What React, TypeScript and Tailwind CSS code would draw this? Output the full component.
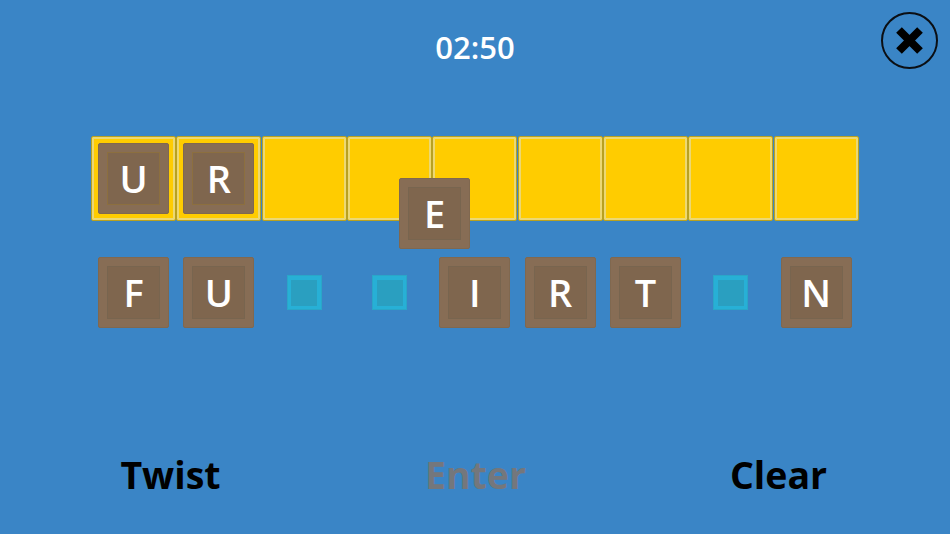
const slots = ["U", "R", "", "", "", "", "", "", ""];
const rack = ["F", "U", "", "", "I", "R", "T", "", "N"];

function Tile({ letter, onYellow }: { letter: string; onYellow?: boolean }) {
  return (
    <div className="flex h-[71px] w-[71px] items-center justify-center rounded-[2px] border border-[#80684f] bg-[#876d55]">
      <div
        className={`flex h-[53px] w-[53px] items-center justify-center border ${
          onYellow ? "border-[#8c6f3f]" : "border-[#78654f]"
        } bg-[#7f664e] text-[38px] font-semibold text-white`}
      >
        {letter}
      </div>
    </div>
  );
}

export default function App() {
  return (
    <div
      className="relative flex h-[534px] w-[950px] flex-col overflow-hidden bg-[#3a85c6]"
      style={{ fontFamily: '"Open Sans", sans-serif' }}
    >
      <div className="flex h-[136px] justify-center pt-[26px]">
        <span className="text-[31px] leading-[42px] font-semibold text-white">02:50</span>
      </div>

      <div className="grid grid-cols-9 px-[91px]">
        {slots.map((letter, i) => (
          <div
            key={i}
            className="flex h-[85px] w-[85px] items-center justify-center rounded-[2px] border border-[#b9a11f] bg-[#ffcc00] shadow-[inset_0_0_0_2px_#ecd873]"
          >
            {letter && <Tile letter={letter} onYellow />}
          </div>
        ))}
      </div>

      <div className="mt-[36px] grid grid-cols-9 px-[91px]">
        {rack.map((letter, i) => (
          <div key={i} className="flex h-[71px] w-[85px] items-center justify-center">
            {letter ? (
              <Tile letter={letter} />
            ) : (
              <div className="flex h-[35px] w-[35px] items-center justify-center border border-[#2aa6c8] bg-[#27b0d6]">
                <div className="h-[26px] w-[26px] bg-[#2a9fc0]" />
              </div>
            )}
          </div>
        ))}
      </div>

      <div className="mt-[122px] flex text-[37.5px] leading-[50px] font-bold">
        <div className="w-[341px] text-center text-black">Twist</div>
        <div className="w-[269px] text-center text-[#74777c]">Enter</div>
        <div className="w-[337px] text-center text-black">Clear</div>
      </div>

      {/* tile being dragged */}
      <div className="absolute top-[178px] left-[399px]">
        <Tile letter="E" />
      </div>

      <button className="absolute top-[12px] left-[881px] h-[57px] w-[57px]">
        <svg viewBox="0 0 57 57" className="h-full w-full">
          <circle cx="28.5" cy="28.5" r="27.5" fill="none" stroke="#0b0f14" strokeWidth="2" />
          <path d="M18 18L39 39M39 18L18 39" stroke="#000" strokeWidth="8" strokeLinecap="butt" />
        </svg>
      </button>
    </div>
  );
}
